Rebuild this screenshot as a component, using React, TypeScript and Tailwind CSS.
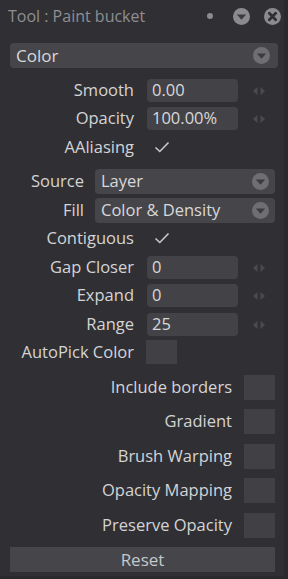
import React from 'react';

const font = { fontFamily: '"Open Sans", "DejaVu Sans", sans-serif' };

const CircleArrow = ({ fill = '#75757a', size = 17 }: { fill?: string; size?: number }) => (
  <svg width={size} height={size} viewBox="0 0 16 16">
    <circle cx="8" cy="8" r="8" fill={fill} />
    <path d="M3.6 6.2 L12.4 6.2 L8 11 Z" fill="#3c3c40" />
  </svg>
);

const CloseCircle = () => (
  <svg width={17} height={17} viewBox="0 0 16 16">
    <circle cx="8" cy="8" r="8" fill="#8b8b8f" />
    <path d="M5 5 L11 11 M11 5 L5 11" stroke="#303034" strokeWidth="2.6" strokeLinecap="round" />
  </svg>
);

const Spinner = () => (
  <svg width={14} height={10} viewBox="0 0 14 10" className="ml-[14px]">
    <path d="M5.5 1 L1 5 L5.5 9 Z" fill="#4a4a4f" />
    <path d="M8.5 1 L13 5 L8.5 9 Z" fill="#4a4a4f" />
  </svg>
);

const Check = () => (
  <svg width={16} height={12} viewBox="0 0 16 12">
    <path d="M1.5 6.5 L5.8 10.5 L14.5 1.5" stroke="#c9c9cc" strokeWidth="1.6" fill="none" />
  </svg>
);

interface FieldProps {
  label: string;
  value: string;
  mt: string;
}

const NumberField: React.FC<FieldProps> = ({ label, value, mt }) => (
  <div className={`flex items-center h-[23px] ${mt}`}>
    <div className="w-[134px] text-right text-[16.5px] text-[#d4d4d6]">{label}</div>
    <div className="ml-[13px] w-[91px] h-[23px] rounded-[4px] bg-[#434347] flex items-center pl-[5px] text-[16.5px] text-[#d8d8da]">
      {value}
    </div>
    <Spinner />
  </div>
);

const CheckField = ({ label, mt }: { label: string; mt: string }) => (
  <div className={`flex items-center h-[20px] ${mt}`}>
    <div className="w-[134px] text-right text-[16.5px] text-[#d4d4d6]">{label}</div>
    <div className="ml-[20px]">
      <Check />
    </div>
  </div>
);

const Select = ({ label, value, mt }: { label: string; value: string; mt: string }) => (
  <div className={`flex items-center h-[25px] ${mt}`}>
    <div className="w-[84px] text-right text-[16.5px] text-[#d4d4d6]">{label}</div>
    <div className="ml-[11px] w-[180px] h-[25px] rounded-[4px] bg-[#46464a] flex items-center justify-between pl-[6px] pr-[6px] text-[16.5px] text-[#d8d8da]">
      <span>{value}</span>
      <CircleArrow fill="#6e6e73" size={17} />
    </div>
  </div>
);

const BoxOption = ({ label, mt }: { label: string; mt: string }) => (
  <div className={`flex items-center h-[25px] ${mt}`}>
    <div className="w-[232px] text-right text-[16.5px] text-[#d4d4d6]">{label}</div>
    <div className="ml-[12px] w-[31px] h-[25px] bg-[#414145]" />
  </div>
);

export default function App() {
  return (
    <div style={font} className="w-[288px] h-[579px] bg-[#2a2a2e] overflow-hidden">
      <div className="w-[284px] h-[576px] bg-[#303034] relative">
        <div className="flex items-center h-[32px] pl-[8px]">
          <span className="text-[16px] text-[#8e8e92] leading-none">Tool : Paint bucket</span>
          <div className="ml-auto flex items-center">
            <div className="w-[6px] h-[6px] rounded-full bg-[#8b8b8f]" />
            <div className="ml-[20px]">
              <CircleArrow fill="#8b8b8f" size={17} />
            </div>
            <div className="ml-[14px] mr-[3px]">
              <CloseCircle />
            </div>
          </div>
        </div>

        <div className="mx-[10px] mt-[11px] h-[25px] w-[268px] rounded-[4px] bg-[#46464a] flex items-center justify-between pl-[6px] pr-[8px]">
          <span className="text-[17px] text-[#d8d8da]">Color</span>
          <CircleArrow fill="#6e6e73" size={17} />
        </div>

        <NumberField label="Smooth" value="0.00" mt="mt-[11px]" />
        <NumberField label="Opacity" value="100.00%" mt="mt-[5px]" />
        <CheckField label="AAliasing" mt="mt-[7px]" />

        <Select label="Source" value="Layer" mt="mt-[12px]" />
        <Select label="Fill" value="Color & Density" mt="mt-[4px]" />
        <CheckField label="Contiguous" mt="mt-[5px]" />

        <NumberField label="Gap Closer" value="0" mt="mt-[8px]" />
        <NumberField label="Expand" value="0" mt="mt-[5px]" />
        <NumberField label="Range" value="25" mt="mt-[6px]" />

        <div className="flex items-center h-[24px] mt-[4px]">
          <div className="w-[134px] text-right text-[16.5px] text-[#d4d4d6]">AutoPick Color</div>
          <div className="ml-[12px] w-[31px] h-[24px] bg-[#414145]" />
        </div>

        <BoxOption label="Include borders" mt="mt-[11px]" />
        <BoxOption label="Gradient" mt="mt-[9px]" />
        <BoxOption label="Brush Warping" mt="mt-[10px]" />
        <BoxOption label="Opacity Mapping" mt="mt-[9px]" />
        <BoxOption label="Preserve Opacity" mt="mt-[10px]" />

        <div className="mx-[10px] mt-[9px] w-[265px] h-[25px] bg-[#46464a] flex items-center justify-center text-[17px] text-[#c4c8cc]">
          Reset
        </div>
      </div>
    </div>
  );
}
